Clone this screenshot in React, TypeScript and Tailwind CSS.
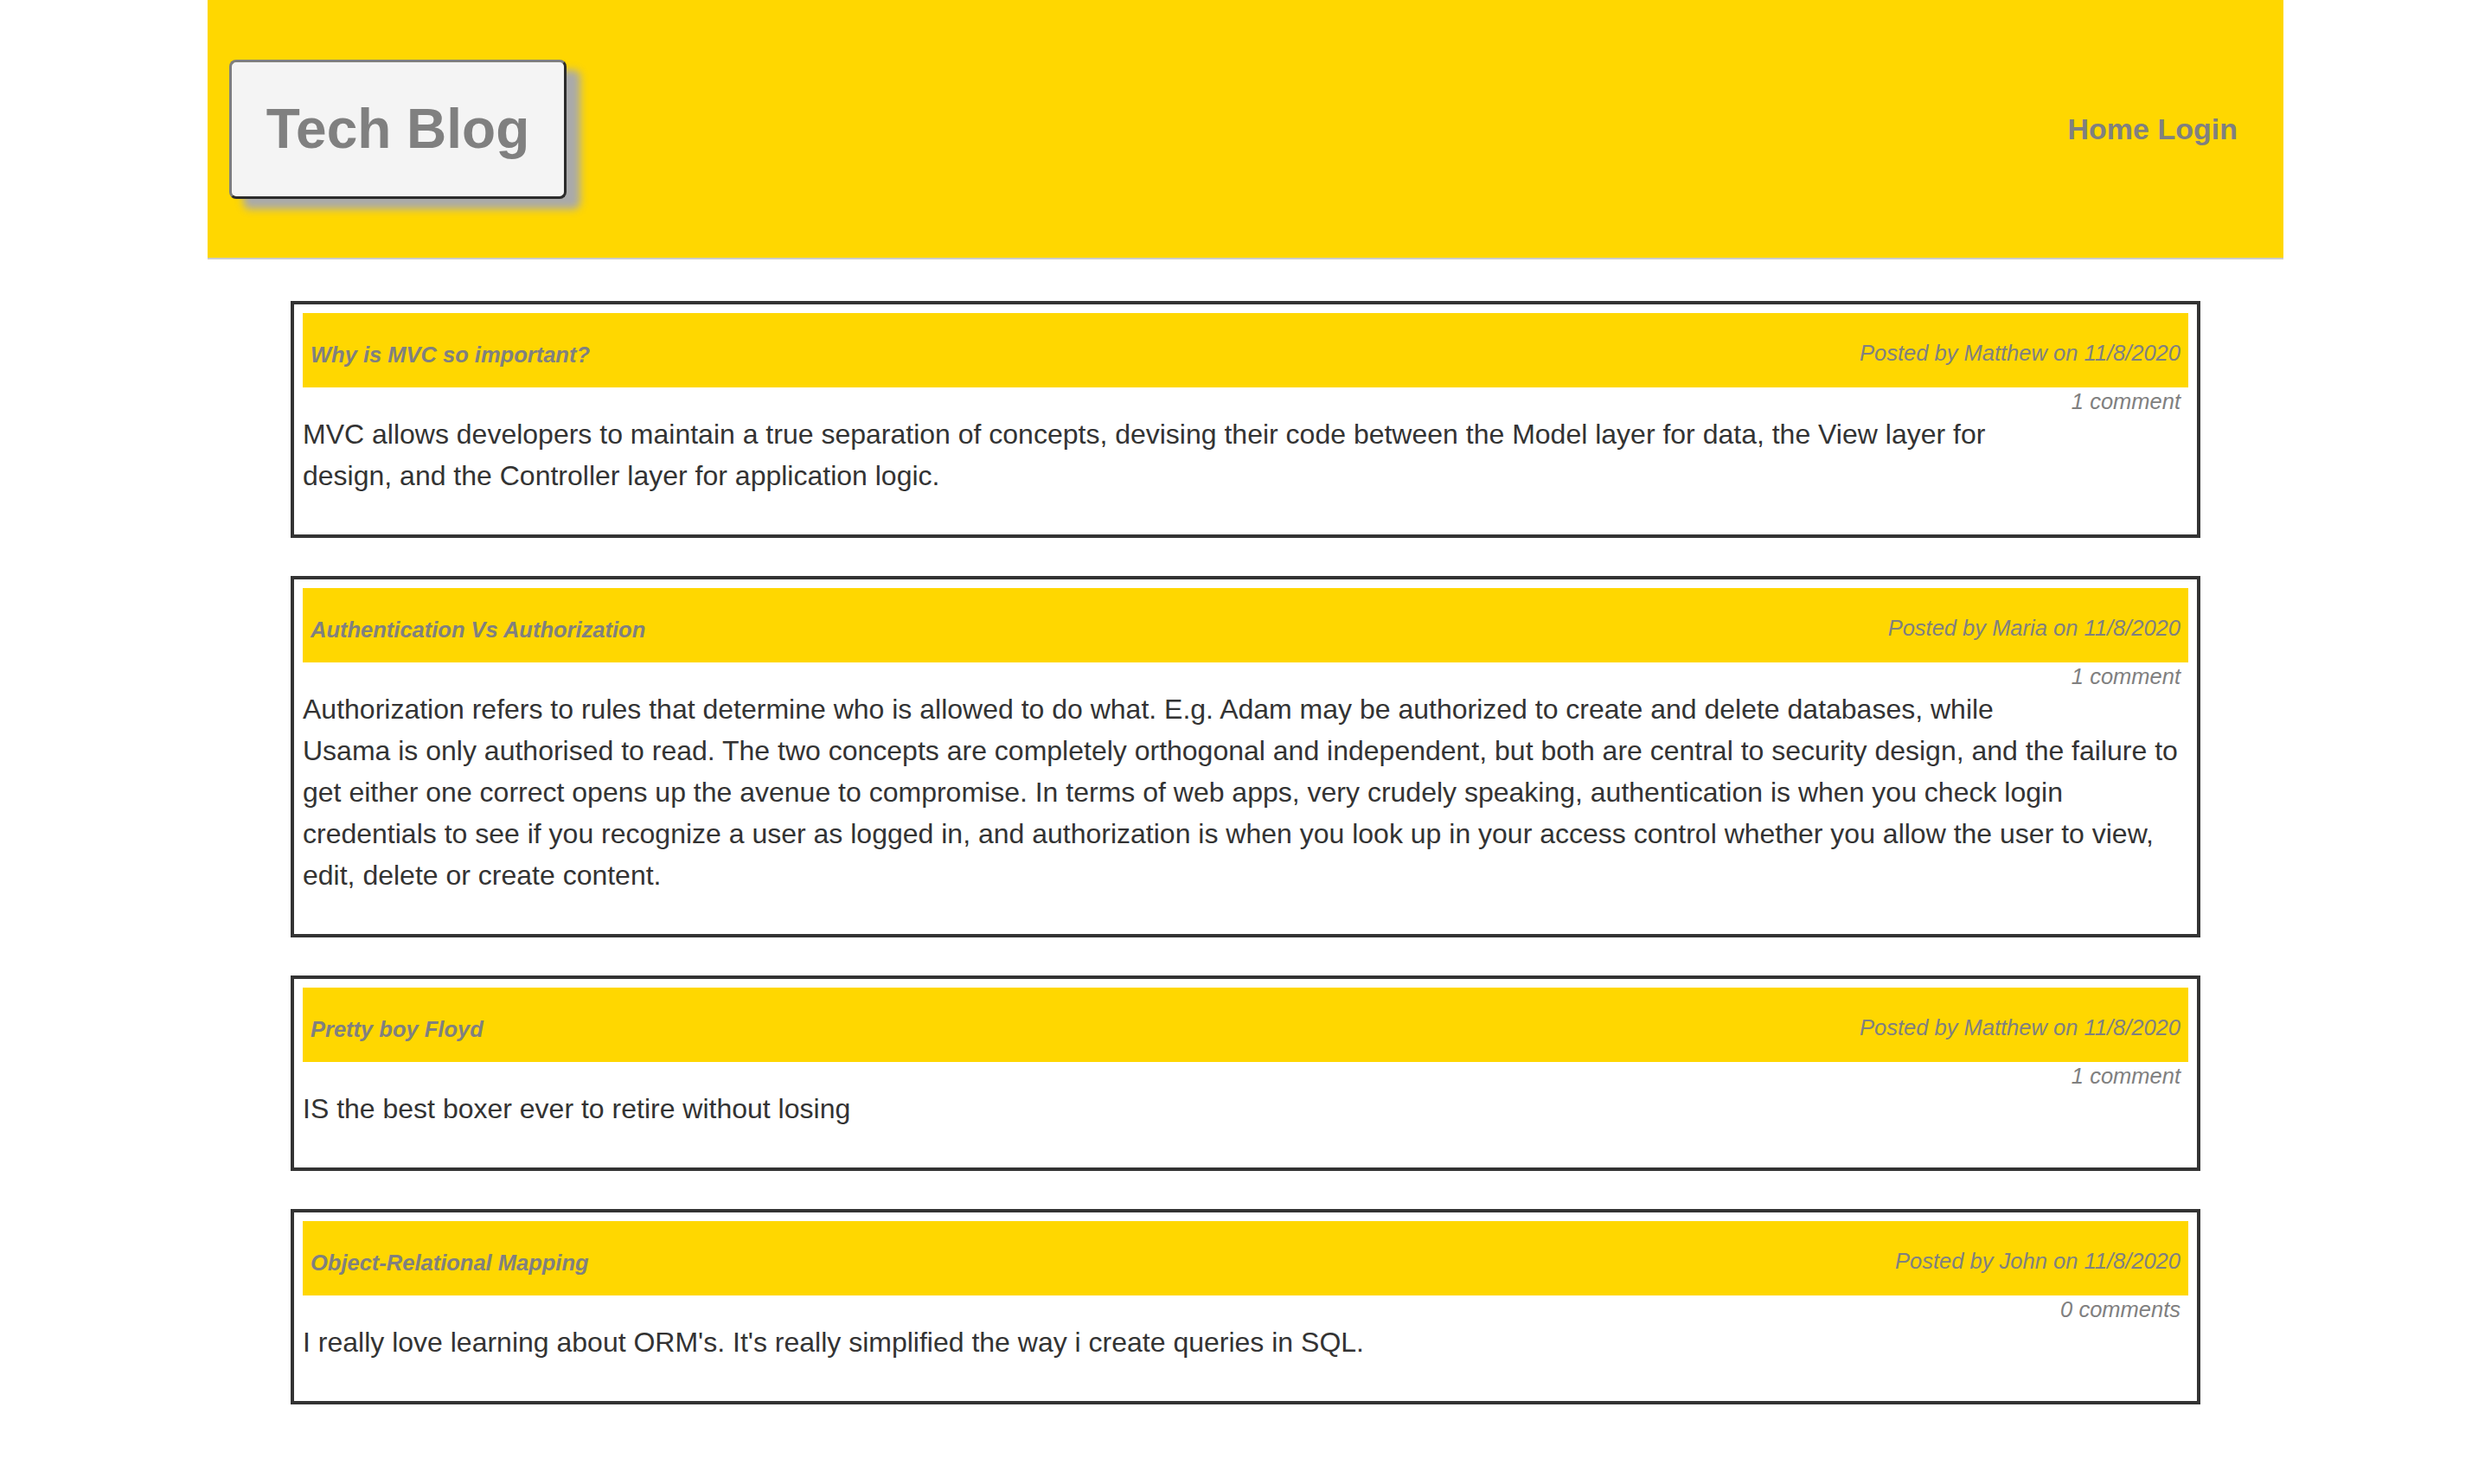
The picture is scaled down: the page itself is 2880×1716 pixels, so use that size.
import React from "react";

interface Post {
  title: string;
  author: string;
  date: string;
  comments: number;
  body: string;
}

const posts: Post[] = [
  {
    title: "Why is MVC so important?",
    author: "Matthew",
    date: "11/8/2020",
    comments: 1,
    body: "MVC allows developers to maintain a true separation of concepts, devising their code between the Model layer for data, the View layer for design, and the Controller layer for application logic.",
  },
  {
    title: "Authentication Vs Authorization",
    author: "Maria",
    date: "11/8/2020",
    comments: 1,
    body: "Authorization refers to rules that determine who is allowed to do what. E.g. Adam may be authorized to create and delete databases, while Usama is only authorised to read. The two concepts are completely orthogonal and independent, but both are central to security design, and the failure to get either one correct opens up the avenue to compromise. In terms of web apps, very crudely speaking, authentication is when you check login credentials to see if you recognize a user as logged in, and authorization is when you look up in your access control whether you allow the user to view, edit, delete or create content.",
  },
  {
    title: "Pretty boy Floyd",
    author: "Matthew",
    date: "11/8/2020",
    comments: 1,
    body: "IS the best boxer ever to retire without losing",
  },
  {
    title: "Object-Relational Mapping",
    author: "John",
    date: "11/8/2020",
    comments: 0,
    body: "I really love learning about ORM's. It's really simplified the way i create queries in SQL.",
  },
];

function PostCard({ post }: { post: Post }) {
  return (
    <article className="w-[92%] mx-auto border-4 border-[#333] p-[10px] bg-white">
      {/* Title bar */}
      <div className="h-[86px] bg-[#ffd700] flex justify-between items-start px-[9px] pt-[27px] text-[25.5px] italic text-[#808080]">
        <h2 className="font-bold mt-[2px]">{post.title}</h2>
        <span>
          Posted by {post.author} on {post.date}
        </span>
      </div>

      {/* Comment count floats so the first body line wraps round it */}
      <div>
        <span className="float-right -mt-[3px] mr-[9px] ml-[12px] pb-[15px] text-[25.5px] italic text-[#808080]">
          {post.comments} {post.comments === 1 ? "comment" : "comments"}
        </span>
        <p className="pt-[30px] pb-[34px] text-[32px] leading-[48px] text-[#333]">{post.body}</p>
      </div>
    </article>
  );
}

export default function App() {
  return (
    <div className="min-h-screen bg-white font-['Liberation_Sans',Arial,sans-serif]">
      <div className="w-[2400px] mx-auto">
        <header className="h-[300px] bg-[#ffd700] border-b-2 border-[#ccc] flex items-center justify-between pl-[25px] pr-[53px]">
          <div className="w-[390px] h-[161px] rounded-[8px] border-[3px] border-t-[#7f7f7f] border-l-[#7f7f7f] border-b-[#2b2b2b] border-r-[#2b2b2b] bg-[#f4f4f4] shadow-[16px_12px_10px_#aaa] flex items-center justify-center">
            <h1 className="text-[64px] font-bold text-[#808080]">Tech Blog</h1>
          </div>
          <nav className="text-[34px] font-bold text-[#808080]">
            <a href="#">Home</a> <a href="#">Login</a>
          </nav>
        </header>

        <main className="pt-[48px] pb-[92px] flex flex-col gap-[44px]">
          {posts.map((post) => (
            <PostCard key={post.title} post={post} />
          ))}
        </main>
      </div>
    </div>
  );
}
